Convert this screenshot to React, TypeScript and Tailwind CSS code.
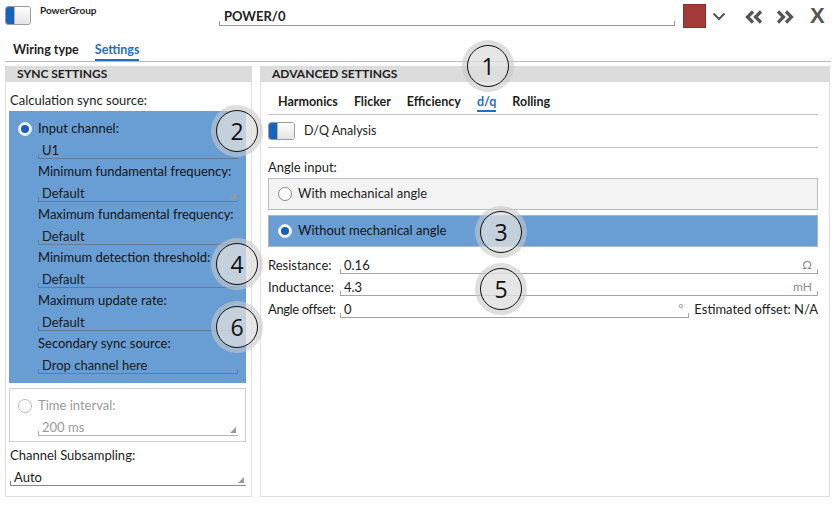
import React from 'react';

const Grip = () => (
  <svg width="6" height="6" viewBox="0 0 6 6" className="absolute right-[2px] bottom-[2px]">
    <polygon points="6,0 6,6 0,6" fill="#9a9a9a" />
  </svg>
);

function Field({
  value,
  grip = false,
  unit,
  line = '#8a8a8a',
  text = 'text-[#1a1a1a]',
  rightTick = false,
  className = '',
}: {
  value: string;
  grip?: boolean;
  unit?: string;
  line?: string;
  text?: string;
  rightTick?: boolean;
  className?: string;
}) {
  return (
    <div
      className={`relative h-[17px] flex items-center pl-[4px] pr-[6px] border-b text-[13px] leading-[16px] ${text} ${className}`}
      style={{ borderColor: line }}
    >
      <span className="absolute left-0 bottom-0 w-px h-[4px]" style={{ background: line }} />
      {rightTick && <span className="absolute right-0 bottom-0 w-px h-[4px]" style={{ background: line }} />}
      <span className="flex-1 truncate">{value}</span>
      {unit && <span className="text-[#8c8c8c] text-[12px]">{unit}</span>}
      {grip && <Grip />}
    </div>
  );
}

function Toggle({ className = '' }: { className?: string }) {
  return (
    <div className={`flex overflow-hidden rounded-[3px] border border-[#9c9c9c] ${className}`}>
      <div className="w-[8px] bg-[#1565c0]" />
      <div className="flex-1 bg-gradient-to-b from-white to-[#e4e4e4] border-l border-[#b5b5b5]" />
    </div>
  );
}

function Radio({ checked = false, muted = false }: { checked?: boolean; muted?: boolean }) {
  return (
    <div
      className={`w-[14px] h-[14px] shrink-0 rounded-full flex items-center justify-center bg-white border ${
        muted ? 'border-[#bdbdbd]' : checked ? 'border-[#e8e8e8]' : 'border-[#8a8a8a]'
      }`}
    >
      {checked && <div className="w-[8px] h-[8px] rounded-full bg-[#1560bd]" />}
    </div>
  );
}

function Callout({ n, className }: { n: number; className: string }) {
  return (
    <div
      className={`absolute w-[52px] h-[52px] rounded-full bg-[rgba(200,200,200,0.6)] p-[5px] ${className}`}
    >
      <div className="w-full h-full rounded-full border-[1.5px] border-[#111] bg-[rgba(240,240,240,0.45)] flex items-center justify-center text-[23px] text-[#111] font-['Open_Sans',sans-serif] leading-none">
        {n}
      </div>
    </div>
  );
}

const Label = ({ children }: { children: React.ReactNode }) => (
  <div className="h-[21.5px] flex items-center text-[13px]">{children}</div>
);

const FieldRow = ({ children }: { children: React.ReactNode }) => (
  <div className="h-[21.5px] pt-[2px]">{children}</div>
);

export default function App() {
  const blueLine = '#5f7c9c';
  return (
    <div className="relative w-[836px] h-[505px] bg-white overflow-hidden text-[#1e1e1e] font-['Lato',sans-serif]">
      {/* top bar */}
      <div className="h-[40px] flex items-start">
        <Toggle className="ml-[5px] mt-[6px] w-[26px] h-[19px]" />
        <div className="ml-[9px] mt-[4px] w-[170px] text-[10px] font-bold leading-[12px]">PowerGroup</div>
        <div className="ml-[9px] mt-[9px] w-[456px] relative h-[17px] border-b border-[#9a9a9a] pl-[5px] flex items-center text-[13px] font-bold">
          <span className="absolute left-0 bottom-0 w-px h-[4px] bg-[#9a9a9a]" />
          <span className="absolute right-0 bottom-0 w-px h-[4px] bg-[#9a9a9a]" />
          POWER/0
        </div>
        <div className="ml-[8px] mt-[4px] w-[23px] h-[24px] bg-[#a33a38] border border-[#8a2f2d]" />
        <svg width="14" height="9" viewBox="0 0 14 9" className="ml-[6px] mt-[12px]">
          <polyline points="1.5,1.5 7,7 12.5,1.5" fill="none" stroke="#555" strokeWidth="2" />
        </svg>
        <svg width="18" height="14" viewBox="0 0 18 14" className="ml-[19px] mt-[10px]">
          <path d="M8 1.5 L2.5 7 L8 12.5 M16 1.5 L10.5 7 L16 12.5" fill="none" stroke="#555" strokeWidth="3.2" />
        </svg>
        <svg width="18" height="14" viewBox="0 0 18 14" className="ml-[13px] mt-[10px]">
          <path d="M2 1.5 L7.5 7 L2 12.5 M10 1.5 L15.5 7 L10 12.5" fill="none" stroke="#555" strokeWidth="3.2" />
        </svg>
        <div className="ml-[16px] mt-[4px] text-[22px] font-bold leading-[24px] text-[#555] font-['Liberation_Sans',sans-serif]">
          X
        </div>
      </div>

      {/* tabs */}
      <div className="mx-[5px] h-[22px] flex items-end gap-[16px] pl-[8px] border-b border-[#b8b8b8] text-[12.5px] font-bold">
        <div className="h-[20px] border-b-2 border-transparent leading-[18px]">Wiring type</div>
        <div className="h-[20px] border-b-2 border-[#1f6fc5] text-[#1f6fc5] leading-[18px]">Settings</div>
      </div>

      <div className="mt-[4px] px-[5px] flex gap-[8px]">
        {/* sync settings */}
        <div className="w-[247px] shrink-0 h-[431px] border border-t-0 border-[#e0e0e0] flex flex-col">
          <div className="h-[16px] bg-[#dcdcdc] pl-[12px] text-[12px] font-bold leading-[16px] -mx-px">SYNC SETTINGS</div>
          <div className="px-[3px]">
            <div className="mt-[9px] h-[18px] leading-[18px] pl-[1px] text-[13px]">Calculation sync source:</div>
            <div className="mt-[2px] w-[237px] h-[272px] bg-[#689ed4] pt-[7px] pl-[9px] pr-[8px] text-[#141414]">
              <div className="h-[21.5px] flex items-center gap-[6px] text-[13px]">
                <Radio checked />
                Input channel:
              </div>
              <div className="pl-[20px]">
                <FieldRow><Field value="U1" line={blueLine} /></FieldRow>
                <Label>Minimum fundamental frequency:</Label>
                <FieldRow><Field value="Default" line={blueLine} grip /></FieldRow>
                <Label>Maximum fundamental frequency:</Label>
                <FieldRow><Field value="Default" line={blueLine} grip /></FieldRow>
                <Label>Minimum detection threshold:</Label>
                <FieldRow><Field value="Default" line={blueLine} grip /></FieldRow>
                <Label>Maximum update rate:</Label>
                <FieldRow><Field value="Default" line={blueLine} grip /></FieldRow>
                <Label>Secondary sync source:</Label>
                <FieldRow><Field value="Drop channel here" line={blueLine} rightTick /></FieldRow>
              </div>
            </div>
            <div className="mt-[5px] w-[237px] h-[54px] border border-[#cfcfcf] pt-[6px] pl-[8px] pr-[7px] text-[#9a9a9a]">
              <div className="h-[21.5px] flex items-center gap-[6px] text-[13px]">
                <Radio muted />
                Time interval:
              </div>
              <div className="pl-[20px]">
                <FieldRow><Field value="200 ms" line="#b5b5b5" text="text-[#9a9a9a]" grip /></FieldRow>
              </div>
            </div>
            <div className="mt-[3px] pl-[1px]">
              <Label>Channel Subsampling:</Label>
              <FieldRow><Field value="Auto" line="#8a8a8a" grip className="pl-[3px] w-[236px]" /></FieldRow>
            </div>
          </div>
        </div>

        {/* advanced settings */}
        <div className="flex-1 min-w-0 mr-[1px] h-[431px] border border-t-0 border-[#e0e0e0] flex flex-col">
          <div className="h-[16px] bg-[#dcdcdc] pl-[12px] text-[12px] font-bold leading-[16px] -mx-px">ADVANCED SETTINGS</div>
          <div className="pl-[7px] pr-[11px]">
            <div className="h-[33px] flex items-end gap-[16px] pl-[10px] border-b border-[#c4c4c4] text-[12.5px] font-bold">
              <div className="mb-[2px] h-[18px] leading-[16px] border-b-2 border-transparent">Harmonics</div>
              <div className="mb-[2px] h-[18px] leading-[16px] border-b-2 border-transparent">Flicker</div>
              <div className="mb-[2px] h-[18px] leading-[16px] border-b-2 border-transparent">Efficiency</div>
              <div className="mb-[2px] h-[18px] leading-[16px] border-b-2 border-[#1f6fc5] text-[#1f6fc5]">d/q</div>
              <div className="mb-[2px] h-[18px] leading-[16px] border-b-2 border-transparent">Rolling</div>
            </div>
            <div className="h-[33px] flex items-center gap-[9px] border-b border-[#c4c4c4] text-[12.5px]">
              <Toggle className="w-[27px] h-[18px]" />
              D/Q Analysis
            </div>
            <div className="mt-[10px] h-[18px] leading-[18px] text-[13px]">Angle input:</div>
            <div className="mt-[2px] h-[32px] bg-[#f3f3f3] border border-[#bdbdbd] flex items-center gap-[6px] pl-[9px] text-[13px]">
              <Radio />
              With mechanical angle
            </div>
            <div className="mt-[5px] h-[32px] bg-[#689ed4] border border-[#a9b9c9] flex items-center gap-[6px] pl-[9px] text-[13px] text-[#141414]">
              <Radio checked />
              Without mechanical angle
            </div>
            <div className="mt-[8px] flex flex-col">
              <div className="h-[22px] flex items-start text-[13px]">
                <div className="w-[72px] shrink-0 h-[22px] flex items-center whitespace-nowrap">Resistance:</div>
                <div className="flex-1 pt-[2px]"><Field value="0.16" unit="Ω" rightTick line="#a5a5a5" /></div>
              </div>
              <div className="h-[22px] flex items-start text-[13px]">
                <div className="w-[72px] shrink-0 h-[22px] flex items-center whitespace-nowrap">Inductance:</div>
                <div className="flex-1 pt-[2px]"><Field value="4.3" unit="mH" rightTick line="#a5a5a5" /></div>
              </div>
              <div className="h-[22px] flex items-start text-[13px]">
                <div className="w-[72px] shrink-0 h-[22px] flex items-center whitespace-nowrap tracking-[-0.4px]">Angle offset:</div>
                <div className="flex-1 min-w-0 pt-[2px]"><Field value="0" unit="°" rightTick line="#a5a5a5" /></div>
                <div className="ml-[5px] shrink-0 h-[22px] flex items-center whitespace-nowrap">Estimated offset: N/A</div>
              </div>
            </div>
          </div>
        </div>
      </div>

      {/* callouts */}
      <Callout n={1} className="left-[462px] top-[40px]" />
      <Callout n={2} className="left-[211px] top-[105px]" />
      <Callout n={3} className="left-[475px] top-[206px]" />
      <Callout n={4} className="left-[211px] top-[238px]" />
      <Callout n={5} className="left-[475px] top-[263px]" />
      <Callout n={6} className="left-[211px] top-[301px]" />
    </div>
  );
}
